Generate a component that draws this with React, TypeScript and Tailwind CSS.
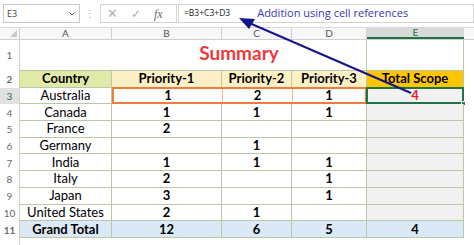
import { ChevronDown } from "lucide-react";

const rows = [
  ["Australia", "1", "2", "1"],
  ["Canada", "1", "1", "1"],
  ["France", "2", "", ""],
  ["Germany", "", "1", ""],
  ["India", "1", "1", "1"],
  ["Italy", "2", "", "1"],
  ["Japan", "3", "", "1"],
  ["United States", "2", "1", ""],
];

const grid = "border-r border-b border-[#b9c9a8]";

function RowNum({ n, active }: { n: string; active?: boolean }) {
  return (
    <div
      className={`w-[20px] shrink-0 flex items-center justify-center text-[10px] border-r border-[#d0d0d0] ${
        active ? "text-[#217346] bg-[#e1e1e1]" : "text-[#6a6a6a]"
      }`}
    >
      {n}
    </div>
  );
}

export default function App() {
  return (
    <div
      className="relative w-[474px] h-[245px] bg-white overflow-hidden text-black"
      style={{ fontFamily: "Lato, 'Open Sans', sans-serif" }}
    >
      {/* Formula bar */}
      <div className="h-[28px] flex items-center border-b border-[#d8d8d8] text-[9px]" style={{ fontFamily: "'Open Sans', sans-serif" }}>
        <div className="ml-[3px] w-[77px] h-[19px] border border-[#c8c8c8] flex items-center justify-between px-[3px] text-[#444]">
          <span>E3</span>
          <ChevronDown className="w-[8px] h-[8px] text-[#555]" strokeWidth={3} />
        </div>
        <span className="ml-[5px] text-[#aaa] text-[10px]">⋮</span>
        <div className="ml-[5px] w-[77px] h-[19px] border border-[#d4d4d4] flex items-center gap-[13px] px-[6px]">
          <span className="text-[#b0b0b0] text-[13px] leading-none">✕</span>
          <span className="text-[#b0b0b0] text-[12px] leading-none">✓</span>
          <span className="text-[#666] text-[12px] italic leading-none" style={{ fontFamily: "'Liberation Serif', serif" }}>
            fx
          </span>
        </div>
        <div className="ml-[1px] flex-1 h-[19px] border border-[#d4d4d4] flex items-center pl-[5px]">
          <span className="text-[#222] text-[8.5px]">=B3+C3+D3</span>
          <span className="ml-[27px] text-[11px] text-[#3737b8]">Addition using cell references</span>
        </div>
      </div>

      {/* Column headers */}
      <div className="h-[12px] flex text-[10px] text-[#555] bg-[#f7f7f7] border-b border-[#cfcfcf]">
        <div className="w-[20px] shrink-0 border-r border-[#d0d0d0] relative">
          <div className="absolute right-[2px] bottom-[2px] w-0 h-0 border-l-[7px] border-l-transparent border-b-[7px] border-b-[#c9c9c9]" />
        </div>
        <div className="w-[92px] shrink-0 flex items-center justify-center border-r border-[#d0d0d0]">A</div>
        <div className="w-[110px] shrink-0 flex items-center justify-center border-r border-[#d0d0d0]">B</div>
        <div className="w-[70px] shrink-0 flex items-center justify-center border-r border-[#d0d0d0]">C</div>
        <div className="w-[75px] shrink-0 flex items-center justify-center border-r border-[#d0d0d0]">D</div>
        <div className="w-[97px] shrink-0 flex items-center justify-center bg-[#d9d9d9] text-[#217346] border-b-2 border-[#217346]">E</div>
      </div>

      {/* Row 1 */}
      <div className="h-[31px] flex">
        <RowNum n="1" />
        <div className="w-[92px] shrink-0 border-b border-[#b9c9a8]" />
        <div className="w-[255px] shrink-0 flex items-end justify-center pb-[3px] text-[19px] font-bold text-[#f03a3a] border-b border-[#b9c9a8] border-r">
          Summary
        </div>
        <div className={`w-[97px] shrink-0 ${grid}`} />
      </div>

      {/* Row 2 header */}
      <div className="h-[16.7px] flex text-[13px] font-bold leading-none">
        <RowNum n="2" />
        <div className={`w-[92px] shrink-0 flex items-center justify-center bg-[#e0e9a8] ${grid}`}>Country</div>
        <div className={`w-[110px] shrink-0 flex items-center justify-center bg-[#fdf0c6] ${grid}`}>Priority-1</div>
        <div className={`w-[70px] shrink-0 flex items-center justify-center bg-[#fdf0c6] ${grid}`}>Priority-2</div>
        <div className={`w-[75px] shrink-0 flex items-center justify-center bg-[#fdf0c6] ${grid}`}>Priority-3</div>
        <div className={`w-[97px] shrink-0 flex items-center justify-center bg-[#ffc600] ${grid}`}>Total Scope</div>
      </div>

      {/* Rows 3-10 */}
      {rows.map((r, i) => {
        const first = i === 0;
        return (
          <div key={r[0]} className="h-[16.7px] flex text-[13px] leading-none">
            <RowNum n={String(i + 3)} active={first} />
            <div className={`w-[92px] shrink-0 flex items-center justify-center ${grid}`}>{r[0]}</div>
            {first ? (
              <div className="w-[255px] shrink-0 flex border-2 border-[#ee7d3a] -mt-[1px] h-[17.7px]">
                <div className="w-[109px] shrink-0 flex items-center justify-center font-bold border-r border-[#f2b48a]">{r[1]}</div>
                <div className="w-[70px] shrink-0 flex items-center justify-center font-bold border-r border-[#f2b48a]">{r[2]}</div>
                <div className="flex-1 flex items-center justify-center font-bold">{r[3]}</div>
              </div>
            ) : (
              <>
                <div className={`w-[110px] shrink-0 flex items-center justify-center font-bold ${grid}`}>{r[1]}</div>
                <div className={`w-[70px] shrink-0 flex items-center justify-center font-bold ${grid}`}>{r[2]}</div>
                <div className={`w-[75px] shrink-0 flex items-center justify-center font-bold ${grid}`}>{r[3]}</div>
              </>
            )}
            <div className={`relative w-[97px] shrink-0 flex items-center justify-center font-bold bg-[#f1f1f1] ${grid}`}>
              {first && (
                <>
                  <span className="text-[#ee2020]">4</span>
                  <div className="absolute -left-[1px] -top-[1px] -right-[1px] -bottom-[1px] border-2 border-[#217346]" />
                  <div className="absolute -right-[3px] -bottom-[3px] w-[5px] h-[5px] bg-[#217346] border border-white" />
                </>
              )}
            </div>
          </div>
        );
      })}

      {/* Row 11 totals */}
      <div className="h-[16.7px] flex text-[13px] font-bold leading-none">
        <RowNum n="11" />
        <div className={`w-[92px] shrink-0 flex items-center justify-center bg-[#dbe8f5] ${grid}`}>Grand Total</div>
        <div className={`w-[110px] shrink-0 flex items-center justify-center bg-[#dbe8f5] ${grid}`}>12</div>
        <div className={`w-[70px] shrink-0 flex items-center justify-center bg-[#dbe8f5] ${grid}`}>6</div>
        <div className={`w-[75px] shrink-0 flex items-center justify-center bg-[#dbe8f5] ${grid}`}>5</div>
        <div className={`w-[97px] shrink-0 flex items-center justify-center bg-[#dbe8f5] ${grid}`}>4</div>
      </div>

      <div className="flex h-[10px]">
        <RowNum n="" />
      </div>

      {/* Annotation arrow */}
      <svg className="absolute left-0 top-0 pointer-events-none" width="474" height="245">
        <line x1="247" y1="22" x2="411" y2="93" stroke="#14148c" strokeWidth="2" />
        <polygon points="239,18 255,19 249,29" fill="#14148c" />
      </svg>
    </div>
  );
}
